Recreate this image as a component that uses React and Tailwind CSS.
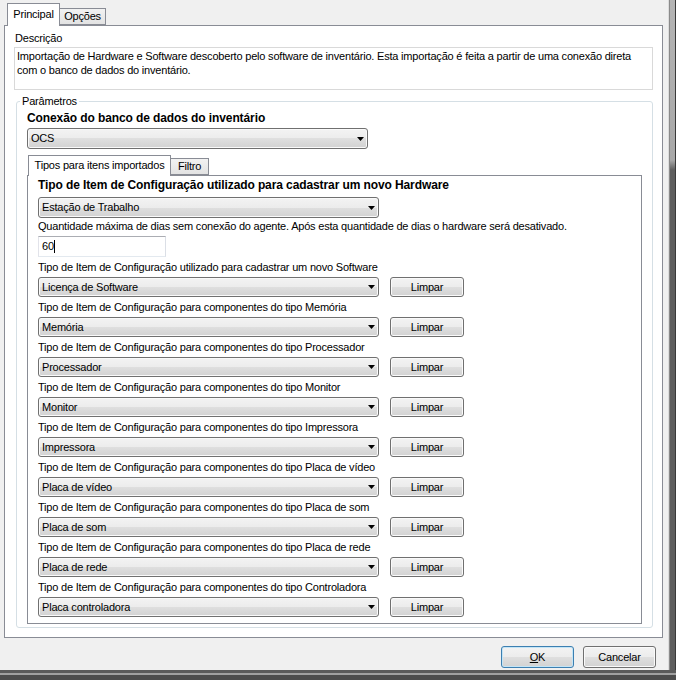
import React from "react";

const rows = [
  ["Tipo de Item de Configuração utilizado para cadastrar um novo Software", "Licença de Software"],
  ["Tipo de Item de Configuração para componentes do tipo Memória", "Memória"],
  ["Tipo de Item de Configuração para componentes do tipo Processador", "Processador"],
  ["Tipo de Item de Configuração para componentes do tipo Monitor", "Monitor"],
  ["Tipo de Item de Configuração para componentes do tipo Impressora", "Impressora"],
  ["Tipo de Item de Configuração para componentes do tipo Placa de vídeo", "Placa de vídeo"],
  ["Tipo de Item de Configuração para componentes do tipo Placa de som", "Placa de som"],
  ["Tipo de Item de Configuração para componentes do tipo Placa de rede", "Placa de rede"],
  ["Tipo de Item de Configuração para componentes do tipo Controladora", "Placa controladora"],
];

function Combo({ text, className }) {
  return (
    <div
      className={
        "flex items-center rounded-[3px] border border-[#707070] bg-[linear-gradient(to_bottom,#f3f3f3_0%,#ececec_50%,#dfdfdf_50%,#d2d2d2_100%)] shadow-[inset_0_0_0_1px_#fafafa] pl-[3px] pr-[3px] " +
        className
      }
    >
      <span className="flex-1 whitespace-nowrap">{text}</span>
      <svg width="7" height="4" viewBox="0 0 7 4" className="shrink-0">
        <path d="M0 0H7L3.5 4Z" fill="#000" />
      </svg>
    </div>
  );
}

function Btn({ children, className }) {
  return (
    <div
      className={
        "flex items-center justify-center rounded-[3px] border bg-[linear-gradient(to_bottom,#f3f3f3_0%,#ececec_50%,#dfdfdf_50%,#d2d2d2_100%)] whitespace-nowrap " +
        className
      }
    >
      {children}
    </div>
  );
}

export default function App() {
  return (
    <div className="w-[676px] h-[680px] bg-[#f0f0f0] flex flex-col overflow-hidden text-[11px] leading-[13px] tracking-[-0.2px] text-black font-['Liberation_Sans',Arial,sans-serif]">
      <div className="flex flex-1 min-h-0">
        <div className="flex-1 flex flex-col pl-[4px] pr-[5px] pt-[3px]">
          {/* main tabs */}
          <div className="h-[22px] flex items-end pl-[3px]">
            <div className="relative z-10 h-[23px] -mb-[1px] w-[53px] border border-b-0 border-[#898c95] bg-white flex items-center justify-center pb-[2px]">
              Principal
            </div>
            <div className="h-[17px] w-[46px] border border-l-0 border-[#898c95] bg-[linear-gradient(to_bottom,#f2f2f2,#e3e3e3)] flex items-center justify-center">
              Opções
            </div>
          </div>
          {/* main panel */}
          <div className="h-[613px] border border-[#898c95] bg-white flex flex-col pl-[9px] pt-[6px]">
            <div className="pl-[1px]">Descrição</div>
            <div className="mt-[2px] w-[639px] h-[43px] border border-[#d9d9d9] pl-[2px] pt-[1px] leading-[14px] whitespace-nowrap">
              Importação de Hardware e Software descoberto pelo software de inventário. Esta importação é feita a partir de uma conexão direta
              <br />
              com o banco de dados do inventário.
            </div>
            <fieldset className="mt-[5px] ml-[2px] w-[637px] border border-[#d5dfe5] rounded-[3px] pl-[3px]">
              <legend className="px-[2px] leading-[13px]">Parâmetros</legend>
              <div className="pl-[7px] pt-[4px] pb-[3px]">
                <div className="font-bold text-[12px] tracking-[-0.1px] leading-[13px]">Conexão do banco de dados do inventário</div>
                <Combo text="OCS" className="mt-[3px] w-[341px] h-[21px]" />
                {/* inner tabs */}
                <div className="mt-[6px] h-[20px] flex items-end pl-[1px]">
                  <div className="relative z-10 h-[21px] -mb-[1px] w-[143px] border border-b-0 border-[#898c95] bg-white flex items-center justify-center pb-[2px]">
                    Tipos para itens importados
                  </div>
                  <div className="h-[17px] w-[38px] border border-l-0 border-[#898c95] bg-[linear-gradient(to_bottom,#f2f2f2,#e3e3e3)] flex items-center justify-center">
                    Filtro
                  </div>
                </div>
                <div className="w-[615px] h-[449px] border border-[#898c95] bg-white pl-[10px] pt-[3px] flex flex-col">
                  <div className="font-bold text-[12px] tracking-[-0.1px] leading-[13px] whitespace-nowrap">
                    Tipo de Item de Configuração utilizado para cadastrar um novo Hardware
                  </div>
                  <Combo text="Estação de Trabalho" className="mt-[5px] w-[341px] h-[21px]" />
                  <div className="mt-[2px] whitespace-nowrap">
                    Quantidade máxima de dias sem conexão do agente. Após esta quantidade de dias o hardware será desativado.
                  </div>
                  <div className="mt-[3px] w-[128px] h-[21px] border border-t-[#abadb3] border-l-[#e2e3ea] border-r-[#dbdfe6] border-b-[#e3e9ef] pl-[3px] flex items-center">
                    <span>60</span>
                    <span className="w-px h-[13px] bg-black" />
                  </div>
                  {rows.map(([label, value]) => (
                    <div key={label} className="flex flex-col">
                      <div className="h-[20px] leading-[20px] whitespace-nowrap">{label}</div>
                      <div className="h-[20px] flex items-center gap-[11px]">
                        <Combo text={value} className="w-[341px] h-[20px]" />
                        <Btn className="w-[74px] h-[20px] border-[#707070] shadow-[inset_0_0_0_1px_#fafafa]">Limpar</Btn>
                      </div>
                    </div>
                  ))}
                </div>
              </div>
            </fieldset>
          </div>
          {/* buttons */}
          <div className="mt-[8px] h-[22px] flex justify-end gap-[9px] pr-[7px]">
            <Btn className="w-[73px] h-[22px] border-[#3c7fb1] shadow-[inset_0_0_0_1px_#c4e5f6]">
              <span className="underline">O</span>K
            </Btn>
            <Btn className="w-[73px] h-[22px] border-[#707070] shadow-[inset_0_0_0_1px_#fafafa]">Cancelar</Btn>
          </div>
        </div>
        {/* right window frame */}
        <div className="w-[8px] flex">
          <div className="w-px bg-[#dcdcdc]" />
          <div className="w-px bg-[#8a8a8a]" />
          <div className="flex-1 bg-[linear-gradient(to_bottom,#b4b4b4_0px,#a8a8a8_160px,#5e5e5e_170px,#5e5e5e_100%)]" />
          <div className="w-px bg-[#3a3a3a]" />
        </div>
      </div>
      {/* bottom window frame */}
      <div className="h-[10px] flex flex-col">
        <div className="h-[3px] bg-[#5a5a5a]" />
        <div className="h-[2px] bg-[#a0a0a0]" />
        <div className="flex-1 bg-[#4c4c4c]" />
      </div>
    </div>
  );
}
